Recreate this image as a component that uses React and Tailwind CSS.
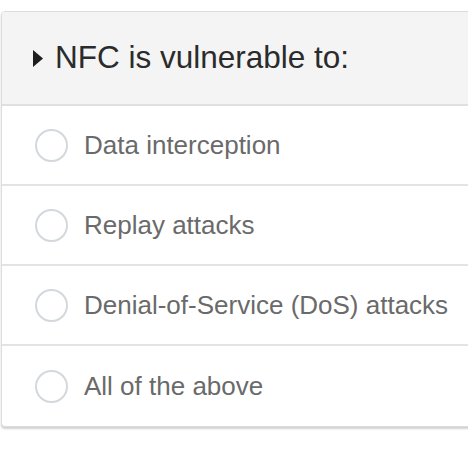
export default function App() {
  const options = [
    "Data interception",
    "Replay attacks",
    "Denial-of-Service (DoS) attacks",
    "All of the above",
  ];
  return (
    <div className="w-[468px] h-[450px] overflow-hidden bg-white pt-[11px] pl-px" style={{ fontFamily: '"Liberation Sans", Arial, sans-serif' }}>
      <div className="w-[490px] rounded-[4px] border border-[#dcdcdc] bg-white shadow-[0_2px_2px_rgba(0,0,0,0.18)] overflow-hidden">
        <div className="flex h-[94px] items-center bg-[#f4f4f4] pl-[31px] border-b-2 border-[#e0e0e0]">
          <svg width="10" height="17" viewBox="0 0 10 17" className="mr-[12px] shrink-0">
            <polygon points="0,0 10,8.5 0,17" fill="#1e1e1e" />
          </svg>
          <span className="text-[31.5px] text-[#2b2b2b] leading-none">NFC is vulnerable to:</span>
        </div>
        {options.map((o, i) => (
          <div key={i} className={`flex h-[80px] items-center pl-[33px] ${i < options.length - 1 ? "border-b-2 border-[#e3e3e3]" : ""}`}>
            <span className="w-[33px] h-[33px] rounded-full border-2 border-[#d3d8dd] bg-white shrink-0" />
            <span className="ml-[16px] text-[26px] text-[#6a6a6a] leading-none">{o}</span>
          </div>
        ))}
      </div>
    </div>
  );
}
